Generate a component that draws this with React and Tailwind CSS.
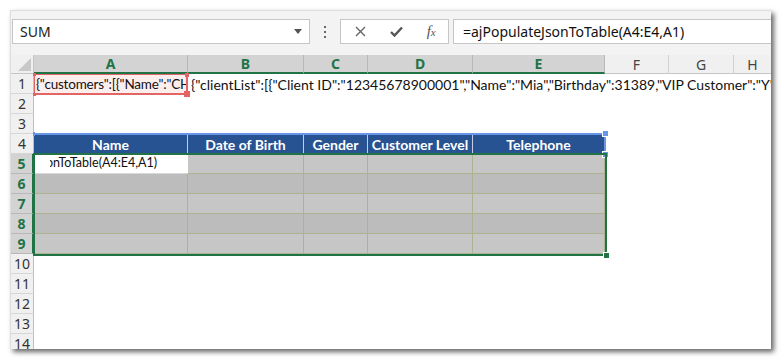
import React from "react";

const COLS = ["A", "B", "C", "D", "E", "F", "G", "H"];
const SEL = new Set(["A", "B", "C", "D", "E"]);
const CELL_FONT = "font-['Lato',sans-serif]";
const UI_FONT = "font-['Noto_Sans',sans-serif]";

function ColHeader({ c }) {
  const sel = SEL.has(c);
  return (
    <div
      className={
        "h-[19px] flex items-center justify-center border-r text-[14px] " +
        UI_FONT +
        (sel
          ? " bg-[#d3d3d3] text-[#217346] font-bold border-[#b8b8b8] border-b-2 border-b-[#217346]"
          : " bg-[#f0f0f0] text-[#444] border-[#d0d0d0] border-b border-b-[#c6c6c6]")
      }
    >
      {c}
    </div>
  );
}

function RowHeader({ n, sel }) {
  return (
    <div
      className={
        "h-[20px] flex items-center justify-center border-b text-[14px] leading-none " +
        UI_FONT +
        (sel
          ? " bg-[#d3d3d3] text-[#217346] font-bold border-[#b8b8b8] border-r-2 border-r-[#217346]"
          : " bg-[#f0f0f0] text-[#333] border-[#d6d6d6] border-r border-r-[#c0c0c0]")
      }
    >
      {n}
    </div>
  );
}

const HEAD = ["Name", "Date of Birth", "Gender", "Customer Level", "Telephone"];

export default function App() {
  const rows = [];
  for (let r = 1; r <= 14; r++) rows.push(r);

  return (
    <div className="w-[782px] h-[360px] bg-white overflow-hidden pt-[10px] pl-[10px]">
      <div className="w-[761px] h-[339px] bg-[#f3f3f3] border-t border-l border-[#dedede] shadow-[3px_3px_5px_rgba(0,0,0,0.6)] flex flex-col overflow-hidden">
        {/* formula bar */}
        <div className="h-[44px] shrink-0 flex items-start pt-[8px] pl-[1px]">
          <div className={"w-[298px] h-[25px] bg-white border border-[#c6c6c6] flex items-center justify-between pl-[7px] pr-[7px] text-[14px] text-[#222] " + UI_FONT}>
            <span>SUM</span>
            <svg width="8" height="5" viewBox="0 0 8 5">
              <path d="M0 0 L8 0 L4 5 Z" fill="#555" />
            </svg>
          </div>
          <div className="w-[30px] h-[25px] flex flex-col items-center justify-center gap-[3px]">
            <div className="w-[2px] h-[2px] bg-[#666]" />
            <div className="w-[2px] h-[2px] bg-[#666]" />
            <div className="w-[2px] h-[2px] bg-[#666]" />
          </div>
          <div className="w-[109px] h-[25px] bg-white border border-[#c6c6c6] flex items-center">
            <div className="w-[36px] flex justify-center pl-[4px]">
              <svg width="11" height="11" viewBox="0 0 11 11">
                <path d="M1 1 L10 10 M10 1 L1 10" stroke="#666" strokeWidth="1.4" />
              </svg>
            </div>
            <div className="w-[36px] flex justify-center pl-[4px]">
              <svg width="13" height="11" viewBox="0 0 13 11">
                <path d="M1 6 L4.5 9.5 L12 1.5" stroke="#555" strokeWidth="2.4" fill="none" />
              </svg>
            </div>
            <div className="w-[36px] flex justify-center pl-[2px]">
              <span className="font-['Liberation_Serif',serif] italic text-[15px] text-[#555] leading-none">
                f<span className="text-[11px]">x</span>
              </span>
            </div>
          </div>
          <div className={"flex-1 ml-[4px] h-[25px] bg-white border-y border-l border-[#c6c6c6] flex items-center pl-[9px] text-[14px] text-[#111] " + UI_FONT}>
            =ajPopulateJsonToTable(A4:E4,A1)
          </div>
        </div>

        {/* grid */}
        <div className="relative flex-1 bg-white">
          <div className="grid grid-cols-[23px_154px_116px_64px_105px_132px_64px_65px_38px]">
            {/* corner */}
            <div className="h-[19px] bg-[#f0f0f0] border-r border-b border-[#c6c6c6] flex items-end justify-end pr-[2px] pb-[2px]">
              <svg width="13" height="13" viewBox="0 0 13 13">
                <path d="M13 0 L13 13 L0 13 Z" fill="#c8c8c8" />
              </svg>
            </div>
            {COLS.map((c, i) => (
              <ColHeader key={i} c={c} />
            ))}

            {rows.map((r) => {
              const sel = r >= 5 && r <= 9;
              const cells = [];
              if (r === 1) {
                cells.push(
                  <div key="a" className={"h-[20px] bg-[#fdeeee] flex items-center overflow-hidden pl-[2px] text-[13.5px] tracking-[-0.2px] text-[#111] whitespace-nowrap " + CELL_FONT}>
                    {'{"customers":[{"Name":"CHARLES"'}
                  </div>
                );
                cells.push(
                  <div key="b" className={"col-span-7 h-[20px] flex items-center overflow-hidden pl-[3px] text-[14px] text-[#111] whitespace-nowrap " + CELL_FONT}>
                    {'{"clientList":[{"Client ID":"12345678900001","Name":"Mia","Birthday":31389,"VIP Customer":"Y"}]}'}
                  </div>
                );
              } else if (r === 4) {
                HEAD.forEach((h, i) => {
                  cells.push(
                    <div key={i} className={"h-[20px] bg-[#275392] text-white font-bold text-[14px] flex items-center justify-center border-r border-[#c8cde6] whitespace-nowrap " + CELL_FONT}>
                      {h}
                    </div>
                  );
                });
                cells.push(<div key="f" className="h-[20px] col-span-3" />);
              } else if (sel) {
                const dark = r % 2 === 0;
                for (let i = 0; i < 5; i++) {
                  if (r === 5 && i === 0) {
                    cells.push(
                      <div key={i} className="h-[20px] bg-white border-b border-[#d8d8d8] flex items-center pl-[16px]">
                        <div className={"w-[120px] overflow-hidden whitespace-nowrap text-[12.5px] text-[#111] " + CELL_FONT}>
                          <span className="inline-block ml-[-4px]">onToTable(A4:E4,A1)</span>
                        </div>
                      </div>
                    );
                  } else {
                    cells.push(
                      <div
                        key={i}
                        className={
                          "h-[20px] border-r border-b border-[#adb28f] " +
                          (dark ? "bg-[#bcbcbc]" : "bg-[#c6c6c6]")
                        }
                      />
                    );
                  }
                }
                cells.push(<div key="f" className="h-[20px] col-span-3" />);
              } else {
                cells.push(<div key="e" className="h-[20px] col-span-8" />);
              }
              return (
                <React.Fragment key={r}>
                  <RowHeader n={r} sel={sel} />
                  {cells}
                </React.Fragment>
              );
            })}
          </div>

          {/* A1 reference highlight */}
          <div className="absolute left-[23px] top-[19px] w-[154px] h-[21px] border border-[#e26464] border-r-2 border-b-2 pointer-events-none">
            <div className="absolute -left-[2px] -top-[2px] w-[3px] h-[3px] bg-[#e26464]" />
            <div className="absolute -right-[3px] -top-[2px] w-[4px] h-[4px] bg-[#e26464]" />
            <div className="absolute -left-[2px] -bottom-[3px] w-[3px] h-[3px] bg-[#e26464]" />
            <div className="absolute -right-[4px] -bottom-[4px] w-[6px] h-[6px] bg-[#e26464]" />
          </div>

          {/* table selection (blue) */}
          <div className="absolute left-[23px] top-[78px] w-[572px] h-[21px] border-t-2 border-r-2 border-[#6895e8] pointer-events-none">
            <div className="absolute -left-[1px] -top-[3px] w-[2px] h-[4px] bg-[#6895e8]" />
            <div className="absolute -left-[1px] bottom-[-2px] w-[2px] h-[3px] bg-[#6895e8]" />
            <div className="absolute -right-[5px] -top-[5px] w-[7px] h-[7px] bg-[#6895e8] border border-white" />
            <div className="absolute -right-[5px] -bottom-[4px] w-[7px] h-[7px] bg-[#6895e8] border border-white" />
          </div>

          {/* range selection (green) */}
          <div className="absolute left-[22px] top-[98px] w-[574px] h-[103px] border-2 border-[#217346] pointer-events-none">
            <div className="absolute -right-[5px] -bottom-[5px] w-[7px] h-[7px] bg-[#217346] border border-white" />
          </div>
        </div>
      </div>
    </div>
  );
}
